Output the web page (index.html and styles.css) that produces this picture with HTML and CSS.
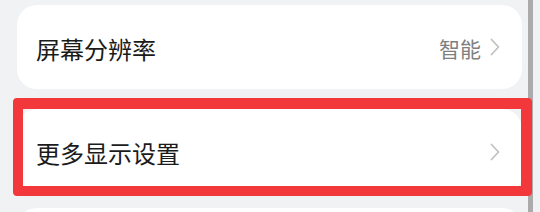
FILE: index.html
```html
<!DOCTYPE html>
<html lang="zh-CN">
    <head>
        <meta charset="UTF-8">
        <meta name="viewport" content="width=device-width, initial-scale=1.0">
        <title>显示</title>
        <link rel="stylesheet" href="styles.css">
    </head>
    <body>
        <div class="screen">
            <div class="list">
                <div class="card row first">
                    <p class="row-title">屏幕分辨率</p>
                    <div class="row-end">
                        <span class="row-value">智能</span>
                        <svg class="arrow" width="10" height="18" viewBox="0 0 10 18"><polyline points="1.5,1.5 8.5,9 1.5,16.5" fill="none" stroke="#c2c2c2" stroke-width="1.8" stroke-linecap="round" stroke-linejoin="round"/></svg>
                    </div>
                </div>
                <div class="card row second">
                    <p class="row-title">更多显示设置</p>
                    <div class="row-end">
                        <svg class="arrow" width="10" height="18" viewBox="0 0 10 18"><polyline points="1.5,1.5 8.5,9 1.5,16.5" fill="none" stroke="#c2c2c2" stroke-width="1.8" stroke-linecap="round" stroke-linejoin="round"/></svg>
                    </div>
                    <div class="mark"></div>
                </div>
                <div class="card third"></div>
            </div>
            <div class="scrollbar"></div>
        </div>
    </body>
</html>
```

FILE: styles.css
```css
body {
    margin: 0;
    background-color: #f1f2f4;
    font-family: "Noto Sans CJK SC", "Noto Sans", sans-serif;
}

.screen {
    position: relative;
    width: 540px;
    height: 212px;
    overflow: hidden;
}

.list {
    display: flex;
    flex-direction: column;
    width: 505px;
    margin-left: 17px;
    padding-top: 5px;
}

.card {
    background-color: #fff;
    border-radius: 20px;
}

.row {
    position: relative;
    display: flex;
    align-items: center;
    justify-content: space-between;
    padding: 0 22px 0 19px;
}

.first {
    height: 84px;
}

.second {
    height: 86px;
    margin-top: 20px;
}

.third {
    height: 40px;
    margin-top: 13px;
}

.row-title {
    margin: 0;
    font-size: 24px;
    color: #1b1b1b;
    padding-top: 3px;
}

.second .row-title {
    padding-top: 0;
}

.row-end {
    display: flex;
    align-items: center;
}

.row-value {
    font-size: 21px;
    color: #7f7f7f;
    margin-right: 9px;
    padding-top: 1px;
}

.arrow {
    display: block;
}

.mark {
    position: absolute;
    z-index: 2;
    left: -4px;
    top: -11px;
    right: -10px;
    bottom: -1px;
    border: 10px solid #f3383b;
    border-top-width: 11px;
    border-right-width: 11px;
    border-radius: 4px;
}

.scrollbar {
    position: absolute;
    z-index: 1;
    top: 0;
    bottom: 0;
    left: 528px;
    width: 5px;
    background-color: #ababab;
}
```
